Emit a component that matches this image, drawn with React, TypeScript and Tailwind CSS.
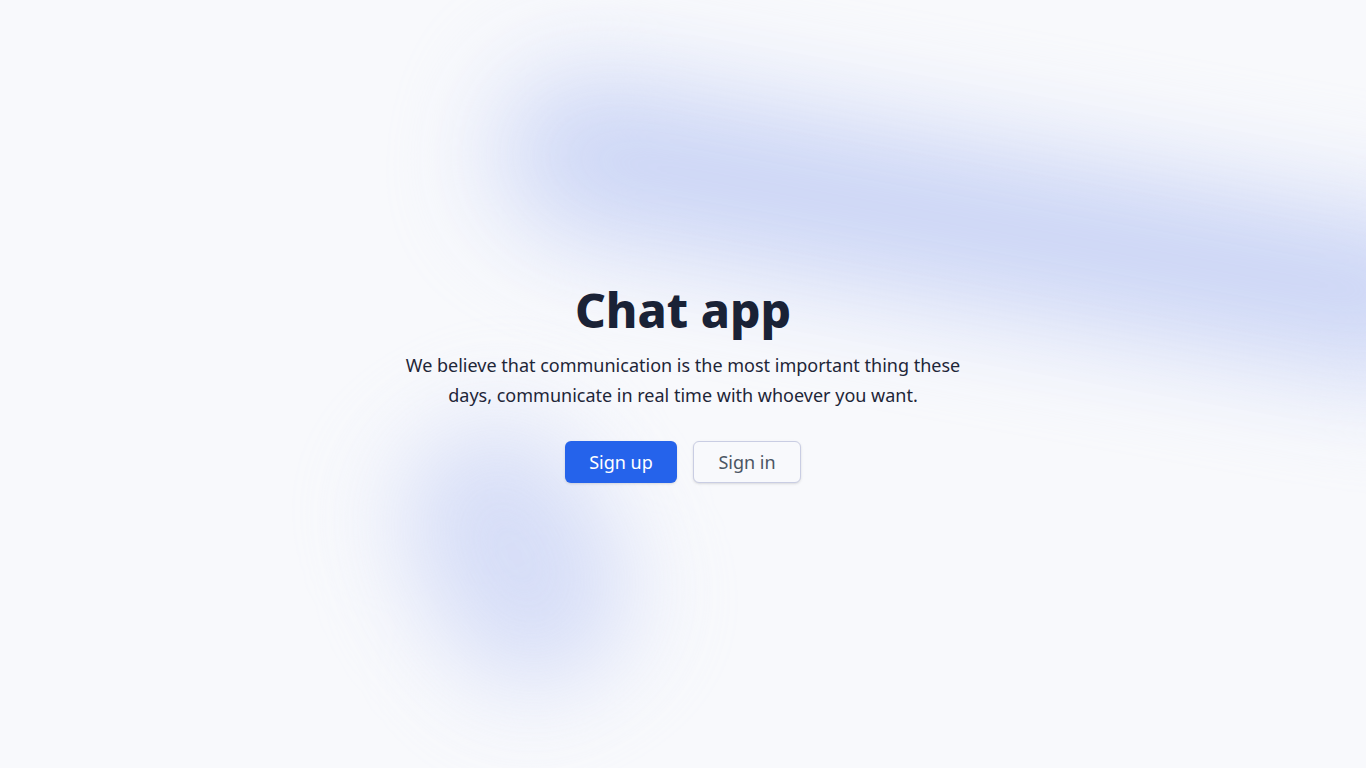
export default function App() {
  return (
    <div
      className="relative isolate flex h-screen w-full items-center justify-center overflow-hidden bg-[#f8f9fc]"
      style={{ fontFamily: '"Noto Sans", "Open Sans", sans-serif' }}
    >
      {/* decorative blurred blobs */}
      <div className="pointer-events-none absolute inset-0 -z-10">
        <div className="absolute left-[500px] top-[60px] h-[160px] w-[1000px] origin-left rotate-[10deg] rounded-full bg-[#c6d1f5] opacity-90 blur-[55px]" />
        <div className="absolute left-[420px] top-[420px] h-[270px] w-[190px] -rotate-[28deg] rounded-full bg-[#cdd6f6] opacity-80 blur-[50px]" />
      </div>

      <div className="flex flex-col items-center text-center">
        <h1 className="text-5xl font-extrabold text-[#1a2236]">Chat app</h1>
        <p className="mt-4 max-w-[570px] text-lg leading-[30px] text-[#1e2638]">
          We believe that communication is the most important thing these days, communicate in
          real time with whoever you want.
        </p>
        <div className="mt-[31px] flex items-center gap-4">
          <button className="h-[42px] w-[112px] rounded-md bg-[#2563eb] text-lg text-white shadow-sm">
            Sign up
          </button>
          <button className="h-[42px] w-[108px] rounded-md border border-[#c9cde3] bg-[#f8f9fc] text-lg text-[#4b5563] shadow-sm">
            Sign in
          </button>
        </div>
      </div>
    </div>
  );
}
